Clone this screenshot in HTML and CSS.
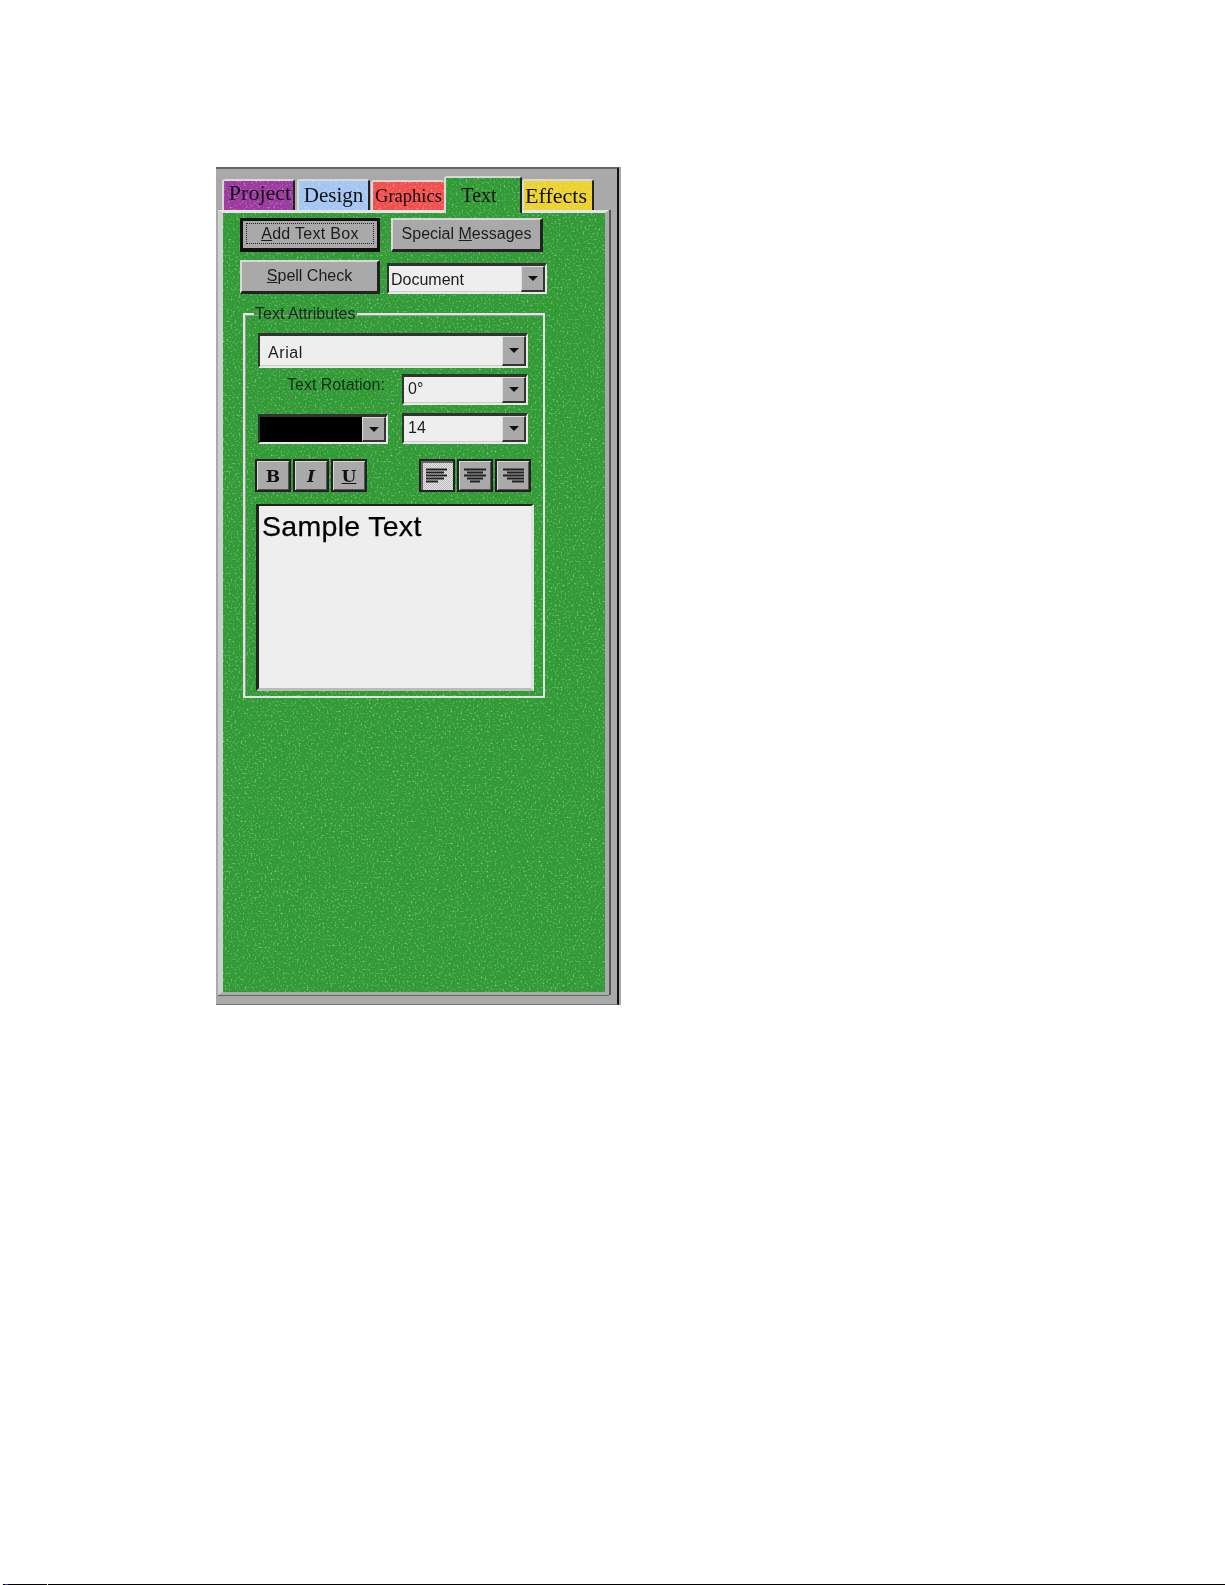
FILE: index.html
```html
<!DOCTYPE html>
<html lang="en">
<head>
<meta charset="utf-8">
<title>Text panel</title>
<link rel="stylesheet" href="styles.css">
</head>
<body>
<div class="page">
  <main class="panel">
    <nav class="tabs">
      <div class="tab tab-project">Project</div>
      <div class="tab tab-design">Design</div>
      <div class="tab tab-graphics">Graphics</div>
      <div class="tab tab-text">Text</div>
      <div class="tab tab-effects">Effects</div>
    </nav>
    <section class="sheet">
      <div class="row row-first">
        <button class="btn btn-default"><span class="focus"><u>A</u>dd Text Box</span></button>
        <button class="btn btn-special">Special <u>M</u>essages</button>
      </div>
      <div class="row row-second">
        <button class="btn btn-spell"><u>S</u>pell Check</button>
        <div class="combo combo-doc"><span class="value">Document</span><span class="drop"><i class="arrow"></i></span></div>
      </div>
      <fieldset class="group">
        <legend>Text Attributes</legend>
        <div class="combo combo-font"><span class="value">Arial</span><span class="drop"><i class="arrow"></i></span></div>
        <div class="attr-row attr-rotation">
          <span class="label">Text Rotation:</span>
          <div class="combo combo-small"><span class="value">0°</span><span class="drop"><i class="arrow"></i></span></div>
        </div>
        <div class="attr-row attr-colour">
          <div class="combo combo-colour"><span class="swatch"></span><span class="drop"><i class="arrow"></i></span></div>
          <div class="combo combo-small"><span class="value">14</span><span class="drop"><i class="arrow"></i></span></div>
        </div>
        <div class="toolbar">
          <div class="tool-set">
            <button class="tool tool-b">B</button>
            <button class="tool tool-i">I</button>
            <button class="tool tool-u">U</button>
          </div>
          <div class="tool-set">
            <button class="tool tool-on"><svg class="lines" viewBox="0 0 22 16"><path d="M0 1.5H21M0 4.5H18M0 7.5H21M0 10.5H18M0 13.5H12"/></svg></button>
            <button class="tool"><svg class="lines" viewBox="0 0 22 16"><path d="M0 1.5H22M3 4.5H19M0 7.5H22M3 10.5H19M6 13.5H16"/></svg></button>
            <button class="tool"><svg class="lines" viewBox="0 0 22 16"><path d="M1 1.5H22M5 4.5H22M1 7.5H22M5 10.5H22M10 13.5H22"/></svg></button>
          </div>
        </div>
        <div class="sample">Sample Text</div>
      </fieldset>
    </section>
  </main>
  <footer class="edge"><i class="px px-y"></i><i class="px px-b"></i><i class="px px-y2"></i></footer>
</div>
</body>
</html>
```

FILE: styles.css
```css
* { box-sizing: border-box; }
:root {
  --speck: url("data:image/svg+xml,%3Csvg xmlns='http://www.w3.org/2000/svg' width='400' height='400'%3E%3Cfilter id='n' x='0' y='0' width='100%25' height='100%25'%3E%3CfeTurbulence type='fractalNoise' baseFrequency='.5' numOctaves='2' seed='7' stitchTiles='stitch'/%3E%3CfeColorMatrix values='0 0 0 0 1 0 0 0 0 1 0 0 0 0 1 1.3 0 0 0 -.7'/%3E%3C/filter%3E%3Crect width='400' height='400' filter='url(%23n)'/%3E%3C/svg%3E");
}
html, body { margin: 0; padding: 0; background: #fff; }
.page {
  width: 1225px; height: 1585px; padding: 167px 0 0 0;
  display: flex; flex-direction: column; justify-content: space-between;
  overflow: hidden;
}
.panel {
  width: 403px; height: 838px; margin-left: 216px; padding-top: 7px;
  background: #a9a9a9;
  border-top: 2px solid #666; border-bottom: 1px solid #777; border-right: 2px solid #111;
  box-shadow: 2px 0 0 #aaa;
  filter: blur(.55px);
  font-family: "Liberation Sans", Arial, sans-serif; font-size: 16px; color: #1c1c1c;
}
.tabs { display: flex; align-items: flex-end; height: 34px; padding-left: 6px; position: relative; z-index: 1; }
.tab {
  height: 31px; font-family: "Liberation Serif", "Times New Roman", serif; color: #111;
  border-top: 2px solid #d8d8d8; border-left: 2px solid #d8d8d8; border-right: 2px solid #222;
  display: flex; align-items: center; justify-content: center; white-space: nowrap;
  background-image: var(--speck); background-size: 400px 400px;
  border-radius: 3px 3px 0 0;
}
.tab-project { width: 73px; margin-right: 2px; background-color: #9c3aa0; font-size: 22px; padding: 0 0 6px 3px; }
.tab-design { width: 73px; margin-right: 1px; background-color: #a4c6f2; font-size: 21px; }
.tab-graphics { width: 73px; background-color: #f2504f; font-size: 18.5px; height: 30px; border-right: 0; }
.tab-text { width: 78px; height: 37px; margin-bottom: -3px; background-color: #329b36; font-size: 20px; padding-right: 8px; }
.tab-effects { width: 72px; background-color: #ecd22e; font-size: 22px; padding-right: 4px; }

.sheet {
  width: 391px; height: 785px; margin-left: 2px; padding: 5px 0 0 17px;
  background-color: #329b36; background-image: var(--speck); background-size: 400px 400px;
  border-style: solid; border-color: #e4e4e4 #a9a9a9 #a9a9a9 #cfcfcf; border-width: 3px 4px 3px 5px;
  box-shadow: 2px 0 0 #555, 0 1px 0 #666;
}
.row { display: flex; align-items: flex-end; }
.row-first { gap: 11px; }
.row-second { gap: 7px; margin-top: 8px; }
.btn {
  height: 34px; padding: 0 0 2px; font: inherit; color: inherit; background: #a9a9a9;
  border-style: solid; border-width: 2px 3px 3px 2px; border-color: #d8d8d8 #222 #222 #d8d8d8;
}
.btn-default { width: 140px; border: 3px solid #111; border-bottom-width: 4px; padding: 2px 3px 4px; }
.focus { display: block; height: 100%; line-height: 20px; border: 1px dotted #222; letter-spacing: .3px; }
.btn-special { width: 152px; }
.btn-spell { width: 140px; }

.combo {
  display: flex; justify-content: space-between; background: #eee;
  border-style: solid; border-width: 3px 2px 2px 2px; border-color: #333 #e8e8e8 #e8e8e8 #333;
  box-shadow: inset -1px -1px 0 #ccc;
}
.combo-doc { width: 160px; height: 31px; }
.combo-font { width: 270px; height: 35px; }
.combo-small { width: 126px; height: 31px; }
.combo-colour { width: 130px; height: 30px; }
.value { padding-left: 2px; line-height: 27px; }
.combo-small .value { padding-left: 4px; line-height: 24px; }
.combo-font .value { padding-left: 8px; line-height: 33px; letter-spacing: .6px; }
.swatch { flex: 1; background: #000; }
.drop {
  width: 24px; display: flex; align-items: center; justify-content: center; background: #a9a9a9;
  border-style: solid; border-width: 1px 2px 2px 1px; border-color: #ddd #333 #333 #ddd;
}
.arrow { width: 0; height: 0; border: 5px solid transparent; border-top: 5px solid #111; border-bottom: 0; }

.group {
  width: 302px; height: 392px; margin: 12px 0 0 3px; padding: 11px 0 0 13px; min-width: 0;
  border: 2px solid #e2e2e2; box-shadow: inset 1px 1px 0 #999;
}
.group legend { margin-left: -4px; padding: 0 1px; height: 16px; line-height: 16px; color: #142a18; }
.attr-row { display: flex; justify-content: space-between; width: 270px; }
.attr-rotation { margin-top: 6px; }
.label { padding: 2px 0 0 29px; line-height: 18px; color: #10301a; }
.attr-colour { margin-top: 8px; align-items: flex-end; }
.toolbar { display: flex; justify-content: space-between; width: 276px; margin: 15px 0 0 -3px; }
.tool-set { display: flex; gap: 2px; }
.tool {
  width: 36px; height: 33px; padding: 0; display: flex; align-items: center; justify-content: center;
  background: #a9a9a9; color: #111;
  border: 2px solid #222; box-shadow: inset 1px 1px 0 #d8d8d8, inset -1px -1px 0 #555;
  font-family: "DejaVu Serif", "Liberation Serif", serif; font-size: 17px; font-weight: 700;
}
.tool-i { font-style: italic; }
.tool-u { text-decoration: underline; }
.tool-on {
  background: repeating-conic-gradient(#e4e4e4 0 25%, #bbb 0 50%) 0 0 / 2px 2px;
  box-shadow: inset 2px 2px 0 #666;
}
.lines { width: 22px; height: 16px; fill: none; stroke: #222; stroke-width: 2; }
.sample {
  width: 278px; height: 187px; margin: 12px 0 0 -2px; padding: 3px 0 0 3px; background: #eee; color: #000;
  font-size: 28.5px; line-height: 35px; letter-spacing: .3px; -webkit-text-stroke: .25px #000;
  border-style: solid; border-width: 2px 3px 3px 3px; border-color: #222 #e2e2e2 #bbb #222;
}

.edge { height: 1px; background: #000; margin-left: 2px; display: flex; }
.px { height: 1px; display: block; }
.px-y { width: 1px; background: #ee6; }
.px-b { width: 3px; margin-left: 2px; background: #33c; }
.px-y2 { width: 1px; margin-left: 39px; background: #ee6; }
```
